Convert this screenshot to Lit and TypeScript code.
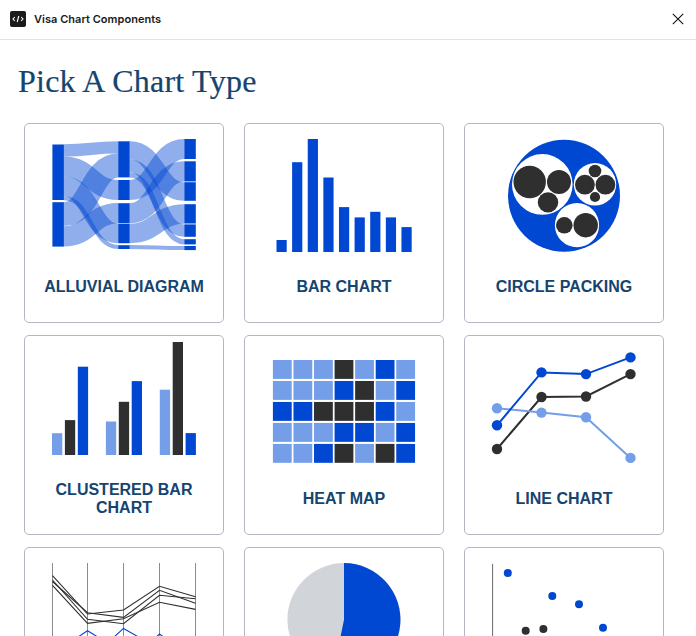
import { LitElement, html, svg, css } from "lit";
import { customElement, property } from "lit/decorators.js";

type Point = [number, number];

const pointList = (points: Point[]) => points.map((p) => p.join(",")).join(" ");

// Every chart is drawn in the same 144 x 114 window, whose origin is (28, 16).

const alluvialNodes: [number, number, number][] = [
  [28.4, 21.5, 77], [28.4, 79.2, 123.6],
  [94.2, 18.3, 54.4], [94.2, 57, 77], [94.2, 80.2, 100], [94.2, 100.6, 120.2], [94.2, 122.2, 126],
  [160.3, 16, 36], [160.3, 38.3, 58.4], [160.3, 59.2, 77.8], [160.3, 81.2, 100.5],
  [160.3, 101.4, 113.8], [160.3, 116.2, 121.4], [160.3, 123, 127.1],
];

// x start, x end, centre at start, centre at end, thickness
const alluvialLinks: [number, number, number, number, number][] = [
  [39.8, 94, 27.4, 24.4, 12.3],
  [39.8, 94, 43.6, 67, 20],
  [39.8, 94, 63.4, 110.4, 19.6],
  [39.8, 94, 75.2, 124, 4],
  [39.8, 94, 91.2, 42.5, 23.8],
  [39.8, 94, 113.4, 90.1, 20.2],
  [105.8, 160.2, 27.4, 68.5, 18.4],
  [105.8, 160.2, 42.8, 107.6, 12.4],
  [105.8, 160.2, 51.8, 118.8, 5.2],
  [105.8, 160.2, 67, 26, 20],
  [105.8, 160.2, 90.1, 48.3, 20.2],
  [105.8, 160.2, 110.4, 90.9, 19.5],
  [105.8, 160.2, 124, 125, 4.1],
];

const alluvial = () => svg`
  ${alluvialLinks.map(([x0, x1, y0, y1, w]) => {
    const mid = (x0 + x1) / 2;
    return svg`<path class="flow" stroke-width=${w} d="M${x0},${y0}C${mid},${y0} ${mid},${y1} ${x1},${y1}"></path>`;
  })}
  ${alluvialNodes.map(([x, top, bottom]) => svg`<rect class="blue" x=${x} y=${top} width="11.5" height=${bottom - top}></rect>`)}
`;

const bars = () =>
  [117, 39.2, 16, 54.5, 84.1, 94.4, 88.8, 94.4, 104.1].map(
    (top, i) => svg`<rect class="blue" x=${32.5 + i * 15.62} y=${top} width="10.2" height=${129 - top}></rect>`
  );

const packs: [string, number, number, number][] = [
  ["blue", 100, 72.8, 56],
  ["white", 78.3, 61.4, 30.3], ["white", 131, 61.3, 21.2], ["white", 113, 102.2, 22.1],
  ["dark", 65.7, 59, 16.2], ["dark", 95, 58.9, 12], ["dark", 84, 79.4, 10.2],
  ["dark", 131, 48, 6.3], ["dark", 120.9, 61.7, 9.9], ["dark", 141.4, 61.7, 9.9], ["dark", 131, 74, 5.1],
  ["dark", 100.3, 102.3, 8.3], ["dark", 121.7, 102.2, 12.2],
];

const circlePacking = () => packs.map(([tone, x, y, r]) => svg`<circle class=${tone} cx=${x} cy=${y} r=${r}></circle>`);

const clusters = [
  [107.2, 94.1, 40.7],
  [95.5, 75.8, 55.1],
  [63.7, 16, 107.1],
];

const clusteredBars = () =>
  clusters.map((group, g) =>
    group.map(
      (top, i) => svg`<rect class=${["light", "dark", "blue"][i]} x=${28 + g * 53.9 + i * 12.9} y=${top}
        width="10.3" height=${129 - top}></rect>`
    )
  );

const heatTones: Record<string, string> = { l: "light", d: "dark", b: "blue" };

const heatMap = () =>
  ["llldlbl", "lllbdlb", "bbdddbl", "lllbblb", "llbdldb"].map((row, r) =>
    [...row].map(
      (key, c) => svg`<rect class=${heatTones[key]} x=${28.9 + c * 20.56} y=${25 + r * 20.98} width="18.8" height="18.9"></rect>`
    )
  );

const lineSeries: [string, number[]][] = [
  ["dark", [114, 62, 61.5, 39.1]],
  ["light", [73.3, 77.6, 82.2, 122.9]],
  ["blue", [90.3, 37.4, 39.1, 22.4]],
];

const lineChart = () =>
  lineSeries.map(([tone, ys]) => {
    const points = ys.map((y, i): Point => [33 + i * 44.5, y]);
    return svg`
      <polyline class="stroke ${tone}" points=${pointList(points)}></polyline>
      ${points.map(([x, y]) => svg`<circle class=${tone} cx=${x} cy=${y} r="5.2"></circle>`)}
    `;
  });

const axes = [28.5, 63.5, 99.5, 135.5, 171.5];
const darkRuns = [
  [28.7, 67, 63, 39.3, 49.7],
  [34.5, 65.7, 70.4, 43.3, 56.3],
  [33, 72.3, 76.7, 48.3, 51.7],
  [38.3, 76.3, 71.7, 55.3, 62.4],
];
const blueRuns = [
  [107, 83.7, 105.7, 108, 112],
  [110, 114.3, 81.4, 102, 106],
  [112, 118, 120.3, 87, 113.7],
];

const parallelPlot = () => svg`
  ${axes.map((x) => svg`<line class="axis" x1=${x} x2=${x} y1="16" y2="129"></line>`)}
  ${darkRuns.map((ys) => svg`<polyline class="thin dark" points=${pointList(ys.map((y, i): Point => [axes[i], y]))}></polyline>`)}
  ${blueRuns.map((ys) => svg`<polyline class="thin blue" points=${pointList(ys.map((y, i): Point => [axes[i], y]))}></polyline>`)}
`;

const pieChart = () => svg`
  <circle class="grey" cx="100" cy="72.7" r="56.6"></circle>
  <path class="blue" d="M100,72.7V16.1A56.6,56.6 0 1 1 88.7,128.2Z"></path>
`;

const scatterDots: [string, number, number][] = [
  ["blue", 43.8, 26], ["blue", 88.3, 49], ["blue", 115, 57.2], ["blue", 139, 80.8],
  ["dark", 61.7, 83.8], ["dark", 79.4, 82],
];

const scatterPlot = () => svg`
  <path class="axis strong" d="M28.6,16.8V129.5H172"></path>
  ${scatterDots.map(([tone, x, y]) => svg`<circle class=${tone} cx=${x} cy=${y} r="4"></circle>`)}
`;

const charts: { name: string; draw: () => unknown }[] = [
  { name: "Alluvial Diagram", draw: alluvial },
  { name: "Bar Chart", draw: bars },
  { name: "Circle Packing", draw: circlePacking },
  { name: "Clustered Bar Chart", draw: clusteredBars },
  { name: "Heat Map", draw: heatMap },
  { name: "Line Chart", draw: lineChart },
  { name: "Parallel Plot", draw: parallelPlot },
  { name: "Pie Chart", draw: pieChart },
  { name: "Scatter Plot", draw: scatterPlot },
];

@customElement("chart-card")
class ChartCard extends LitElement {
  @property() name = "";
  @property({ attribute: false }) draw: () => unknown = () => null;

  static styles = css`
    :host {
      box-sizing: border-box;
      display: flex;
      flex-direction: column;
      align-items: center;
      justify-content: center;
      width: 200px;
      height: 200px;
      border: 1px solid #b5b5c3;
      border-radius: 5px;
      background: #fff;
    }
    .chart {
      display: block;
      flex: none;
      width: 144px;
      height: 114px;
      overflow: visible;
    }
    .name {
      margin: 25px 0 11px;
      width: 164px;
      font: bold 16px/18px "Liberation Sans", Arial, sans-serif;
      text-align: center;
      text-transform: uppercase;
      color: #15446f;
    }
    .blue { fill: #0047d1; stroke: #0047d1; }
    .light { fill: #749ee7; stroke: #749ee7; }
    .dark { fill: #2f2f2f; stroke: #2f2f2f; }
    .white { fill: #fff; }
    .grey { fill: #d1d4d9; }
    rect, circle, .blue { stroke-width: 0; }
    .flow { fill: none; stroke: #0047d1; stroke-opacity: 0.44; }
    .stroke { fill: none; stroke-width: 2; }
    .thin { fill: none; stroke-width: 1.1; }
    .axis { fill: none; stroke: #8c8c8c; stroke-width: 1; }
    .strong { stroke: #6c6c6c; }
  `;

  render() {
    return html`
      <svg class="chart" viewBox="28 16 144 114" aria-hidden="true">${this.draw()}</svg>
      <h2 class="name">${this.name}</h2>
    `;
  }
}

@customElement("app-root")
class AppRoot extends LitElement {
  static styles = css`
    :host {
      display: block;
      height: 100vh;
      overflow: hidden;
      background: #fff;
    }
    .bar {
      box-sizing: border-box;
      display: flex;
      align-items: center;
      height: 40px;
      padding: 0 12px 2px 10px;
      border-bottom: 1px solid #e2e2e2;
      font: 600 11px/16px Inter, sans-serif;
      letter-spacing: 0.03px;
      color: #1a1a1a;
    }
    .logo { width: 16px; height: 16px; margin-right: 8px; }
    .caption { flex: 1; }
    .close { width: 12px; height: 12px; }
    .title {
      margin: 23px 0 0 18px;
      font: 400 32px/36px "Liberation Serif", "Times New Roman", serif;
      letter-spacing: 0.24px;
      color: #15446f;
      -webkit-text-stroke: 0.2px #15446f;
    }
    .grid {
      display: grid;
      grid-template-columns: repeat(3, 200px);
      gap: 12px 20px;
      margin: 24px 0 0 24px;
    }
  `;

  render() {
    return html`
      <header class="bar">
        <svg class="logo" viewBox="0 0 16 16">
          <rect width="16" height="16" rx="2" fill="#1b1b1b"></rect>
          <path d="M4.8 6L3 8l1.8 2M11.2 6L13 8l-1.8 2M8.8 5l-1.6 6" fill="none" stroke="#fff" stroke-width="1.1"></path>
        </svg>
        <span class="caption">Visa Chart Components</span>
        <svg class="close" viewBox="0 0 12 12">
          <path d="M.8 .8L11.2 11.2M11.2 .8L.8 11.2" fill="none" stroke="#111" stroke-width="1.1"></path>
        </svg>
      </header>
      <h1 class="title">Pick A Chart Type</h1>
      <main class="grid">
        ${charts.map((chart) => html`<chart-card .name=${chart.name} .draw=${chart.draw}></chart-card>`)}
      </main>
    `;
  }
}
